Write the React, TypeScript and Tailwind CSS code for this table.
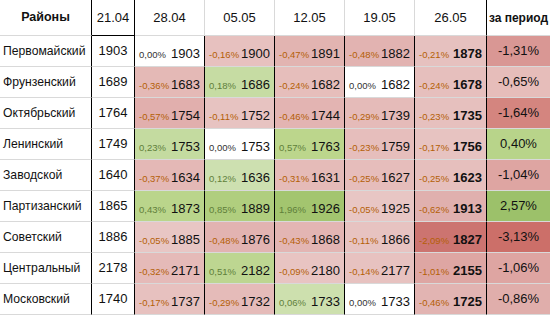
import React from "react";

type Cell = { p: string; v: string; bg: string };
type Row = { name: string; base: string; cells: Cell[]; total: string; totalBg: string };

const dates = ["28.04", "05.05", "12.05", "19.05", "26.05"];

const rows: Row[] = [
  {
    name: "Первомайский",
    base: "1903",
    cells: [
      { p: "0,00%", v: "1903", bg: "bg-white" },
      { p: "-0,16%", v: "1900", bg: "bg-[#e7c1bf]" },
      { p: "-0,47%", v: "1891", bg: "bg-[#e2b4b1]" },
      { p: "-0,48%", v: "1882", bg: "bg-[#e2b3b1]" },
      { p: "-0,21%", v: "1878", bg: "bg-[#e6c1bf]" },
    ],
    total: "-1,31%",
    totalBg: "bg-[#d99794]",
  },
  {
    name: "Фрунзенский",
    base: "1689",
    cells: [
      { p: "-0,36%", v: "1683", bg: "bg-[#e4b9b6]" },
      { p: "0,18%", v: "1686", bg: "bg-[#c6dca3]" },
      { p: "-0,24%", v: "1682", bg: "bg-[#e6bebb]" },
      { p: "0,00%", v: "1682", bg: "bg-white" },
      { p: "-0,24%", v: "1678", bg: "bg-[#e6bfbd]" },
    ],
    total: "-0,65%",
    totalBg: "bg-[#e6bdba]",
  },
  {
    name: "Октябрьский",
    base: "1764",
    cells: [
      { p: "-0,57%", v: "1754", bg: "bg-[#e1afad]" },
      { p: "-0,11%", v: "1752", bg: "bg-[#e7c3c1]" },
      { p: "-0,46%", v: "1744", bg: "bg-[#e3b4b2]" },
      { p: "-0,29%", v: "1739", bg: "bg-[#e5bbb9]" },
      { p: "-0,23%", v: "1735", bg: "bg-[#e6c0be]" },
    ],
    total: "-1,64%",
    totalBg: "bg-[#d4857f]",
  },
  {
    name: "Ленинский",
    base: "1749",
    cells: [
      { p: "0,23%", v: "1753", bg: "bg-[#c4dba0]" },
      { p: "0,00%", v: "1753", bg: "bg-white" },
      { p: "0,57%", v: "1763", bg: "bg-[#bcd68c]" },
      { p: "-0,23%", v: "1759", bg: "bg-[#e6bebc]" },
      { p: "-0,17%", v: "1756", bg: "bg-[#e7c3c1]" },
    ],
    total: "0,40%",
    totalBg: "bg-[#b8d48a]",
  },
  {
    name: "Заводской",
    base: "1640",
    cells: [
      { p: "-0,37%", v: "1634", bg: "bg-[#e4b8b6]" },
      { p: "0,12%", v: "1636", bg: "bg-[#cde0b0]" },
      { p: "-0,31%", v: "1631", bg: "bg-[#e5bbb8]" },
      { p: "-0,25%", v: "1627", bg: "bg-[#e6bdbb]" },
      { p: "-0,25%", v: "1623", bg: "bg-[#e6bfbd]" },
    ],
    total: "-1,04%",
    totalBg: "bg-[#dea5a2]",
  },
  {
    name: "Партизанский",
    base: "1865",
    cells: [
      { p: "0,43%", v: "1873", bg: "bg-[#bad58b]" },
      { p: "0,85%", v: "1889", bg: "bg-[#b0ce7e]" },
      { p: "1,96%", v: "1926", bg: "bg-[#a3c56f]" },
      { p: "-0,05%", v: "1925", bg: "bg-[#e8c6c4]" },
      { p: "-0,62%", v: "1913", bg: "bg-[#e0b0ae]" },
    ],
    total: "2,57%",
    totalBg: "bg-[#9cc16a]",
  },
  {
    name: "Советский",
    base: "1886",
    cells: [
      { p: "-0,05%", v: "1885", bg: "bg-[#e8c6c4]" },
      { p: "-0,48%", v: "1876", bg: "bg-[#e2b3b1]" },
      { p: "-0,43%", v: "1868", bg: "bg-[#e3b5b3]" },
      { p: "-0,11%", v: "1866", bg: "bg-[#e7c3c1]" },
      { p: "-2,09%", v: "1827", bg: "bg-[#cc7470]" },
    ],
    total: "-3,13%",
    totalBg: "bg-[#cc6f69]",
  },
  {
    name: "Центральный",
    base: "2178",
    cells: [
      { p: "-0,32%", v: "2171", bg: "bg-[#e5bab8]" },
      { p: "0,51%", v: "2182", bg: "bg-[#bdd691]" },
      { p: "-0,09%", v: "2180", bg: "bg-[#e8c4c2]" },
      { p: "-0,14%", v: "2177", bg: "bg-[#e7c2c0]" },
      { p: "-1,01%", v: "2155", bg: "bg-[#dea6a3]" },
    ],
    total: "-1,06%",
    totalBg: "bg-[#dea5a2]",
  },
  {
    name: "Московский",
    base: "1740",
    cells: [
      { p: "-0,17%", v: "1737", bg: "bg-[#e7c1bf]" },
      { p: "-0,29%", v: "1732", bg: "bg-[#e5bbb9]" },
      { p: "0,06%", v: "1733", bg: "bg-[#cde0ae]" },
      { p: "0,00%", v: "1733", bg: "bg-white" },
      { p: "-0,46%", v: "1725", bg: "bg-[#e2b4b2]" },
    ],
    total: "-0,86%",
    totalBg: "bg-[#e0aeab]",
  },
];

function pctColor(p: string) {
  if (p === "0,00%") return "text-[#333333]";
  if (p.startsWith("-")) return "text-[#b45f06]";
  return "text-[#5f7f3a]";
}

export default function App() {
  return (
    <div className="w-[550px] h-[316px] bg-white overflow-hidden font-['Liberation_Sans',Arial,sans-serif] text-[13px] text-[#111]">
      <div className="grid grid-cols-[92px_43px_70px_70px_70px_70px_72px_63px] grid-rows-[36px_repeat(9,31px)]">
        {/* шапка */}
        <div className="flex items-center justify-center font-bold text-[12.5px] border-r border-r-black border-b border-b-[#d9d9d9]">
          Районы
        </div>
        <div className="flex items-center justify-center border-r border-r-black border-b border-b-black">
          21.04
        </div>
        {dates.map((d, i) => (
          <div
            key={d}
            className={
              i === 4
                ? "flex items-center justify-center border-r border-r-black border-b border-b-[#d9d9d9]"
                : "flex items-center justify-center border-r border-r-[#d9d9d9] border-b border-b-[#d9d9d9]"
            }
          >
            {d}
          </div>
        ))}
        <div className="flex items-center justify-center font-bold text-[12px] border-b border-b-[#d9d9d9]">
          за период
        </div>

        {/* строки */}
        {rows.map((r) => (
          <React.Fragment key={r.name}>
            <div className="flex items-center pl-[3px] text-[12.2px] border-r border-r-black border-b border-b-[#d9d9d9] whitespace-nowrap">
              {r.name}
            </div>
            <div className="flex items-center justify-center border-r border-r-black border-b border-b-[#d9d9d9]">
              {r.base}
            </div>
            {r.cells.map((c, i) => (
              <div
                key={i}
                className={`flex items-baseline justify-between pl-[4px] pr-[4px] pt-[8px] border-r border-r-black border-b border-b-[#d9d9d9] ${c.bg}`}
              >
                <span className={`text-[9.5px] ${pctColor(c.p)}`}>{c.p}</span>
                <span className={i === 4 ? "font-bold" : ""}>{c.v}</span>
              </div>
            ))}
            <div className={`flex items-center justify-center border-b border-b-[#d9d9d9] ${r.totalBg}`}>
              {r.total}
            </div>
          </React.Fragment>
        ))}
      </div>
    </div>
  );
}
